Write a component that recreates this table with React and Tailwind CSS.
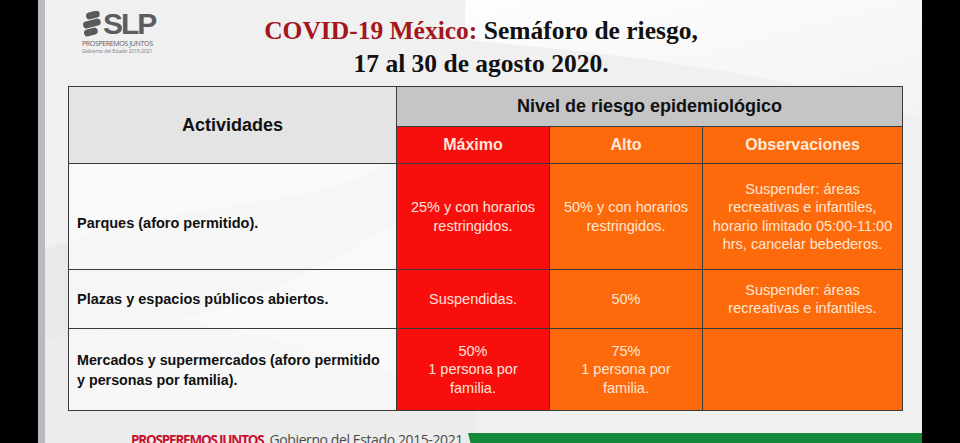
import React from "react";

const sans = { fontFamily: '"Liberation Sans", Arial, sans-serif' };

function Logo() {
  return (
    <div className="flex flex-col text-[#5d5d5f]" style={{ fontFamily: '"Open Sans", "Liberation Sans", sans-serif' }}>
      <div className="flex items-center">
        <svg width="20" height="26" viewBox="0 0 20 26" className="mr-[1px]">
          <g fill="#5a5a5c" transform="rotate(-14 10 13)">
            <rect x="6" y="1" width="14" height="7" rx="3.5" />
            <rect x="1" y="9" width="18" height="7" rx="3.5" />
            <rect x="0" y="17" width="14" height="7" rx="3.5" />
          </g>
        </svg>
        <span className="text-[30px] font-extrabold leading-[26px] tracking-[-2px]" style={{ fontFamily: '"Liberation Sans", Arial, sans-serif' }}>
          SLP
        </span>
      </div>
      <span className="mt-[3px] text-[7px] leading-[8px] tracking-[-0.35px]">PROSPEREMOS JUNTOS</span>
      <span className="text-[4.8px] leading-[6px] text-[#777]">Gobierno del Estado 2015-2021</span>
    </div>
  );
}

function Watermark() {
  return (
    <svg className="pointer-events-none absolute inset-0" width="877" height="443" viewBox="0 0 877 443">
      <defs>
        <linearGradient id="g1" x1="0" y1="0" x2="1" y2="1">
          <stop offset="0" stopColor="#ffffff" stopOpacity="0.9" />
          <stop offset="1" stopColor="#ffffff" stopOpacity="0.2" />
        </linearGradient>
      </defs>
      <path d="M0 250 C120 200 260 210 330 170 C360 150 380 140 420 150 L420 200 C360 210 300 260 200 300 C120 330 60 330 0 340 Z" fill="#e6e6e6" opacity="0.7" />
      <path d="M0 330 C100 300 200 330 300 360 C360 380 400 380 430 370 L430 443 L0 443 Z" fill="#e9e9e9" opacity="0.6" />
      <path d="M420 0 L877 0 L877 120 C760 80 640 60 420 40 Z" fill="url(#g1)" />
    </svg>
  );
}

const th = "border border-[#3a3a3a] p-0 text-center align-middle";

export default function App() {
  return (
    <div className="flex h-[443px] w-[960px] overflow-hidden bg-black">
      <div className="w-[38px] shrink-0" />
      <div className="w-[7px] shrink-0 bg-[#b7bac0]" />
      <div className="relative flex h-[443px] w-[877px] shrink-0 flex-col overflow-hidden bg-[#f0f0f0]">
        <Watermark />
        <div className="relative grid h-[86px] shrink-0 grid-cols-[1fr_auto_1fr]">
          <div className="pl-[37px] pt-[11px]">
            <Logo />
          </div>
          <h1
            className="pr-[5px] pt-[14px] text-center text-[25.5px] font-bold leading-[33px] text-[#111]"
            style={{ fontFamily: '"Liberation Serif", "Times New Roman", serif' }}
          >
            <span className="text-[#a3161c]">COVID-19 México:</span> Semáforo de riesgo,
            <br />
            17 al 30 de agosto 2020.
          </h1>
          <div />
        </div>

        <div className="relative shrink-0 pl-[23px] pr-[20px]" style={sans}>
          <table className="w-[834px] table-fixed border-collapse border border-[#3a3a3a]">
            <colgroup>
              <col className="w-[328px]" />
              <col className="w-[153px]" />
              <col className="w-[153px]" />
              <col className="w-[200px]" />
            </colgroup>
            <thead>
              <tr className="h-[40px]">
                <th rowSpan={2} className={`${th} bg-[#e4e4e4] text-[18px] font-bold text-[#111]`}>
                  Actividades
                </th>
                <th colSpan={3} className={`${th} bg-[#c5c5c5] text-[18px] font-bold text-[#111]`}>
                  Nivel de riesgo epidemiológico
                </th>
              </tr>
              <tr className="h-[37px] text-[16px] font-bold">
                <th className={`${th} bg-[#f80f0d] text-[#ffe6dc]`}>Máximo</th>
                <th className={`${th} bg-[#fd6a0c] text-[#ffe9d6]`}>Alto</th>
                <th className={`${th} bg-[#fd6a0c] text-[#ffe9d6]`}>Observaciones</th>
              </tr>
            </thead>
            <tbody className="text-[14.5px] leading-[18.5px]">
              <tr className="h-[106px]">
                <td className="border border-[#3a3a3a] bg-white/60 pl-[8px] pt-[14px] align-middle font-bold text-[#111]">
                  Parques (aforo permitido).
                </td>
                <td className={`${th} bg-[#f80f0d] text-[#ffe3d8]`}>
                  25% y con horarios
                  <br />
                  restringidos.
                </td>
                <td className={`${th} bg-[#fd6a0c] text-[#ffe6d0]`}>
                  50% y con horarios
                  <br />
                  restringidos.
                </td>
                <td className={`${th} bg-[#fd6a0c] text-[#ffe6d0]`}>
                  Suspender: áreas
                  <br />
                  recreativas e infantiles,
                  <br />
                  horario limitado 05:00-11:00
                  <br />
                  hrs, cancelar bebederos.
                </td>
              </tr>
              <tr className="h-[59px]">
                <td className="border border-[#3a3a3a] bg-white/60 pl-[8px] align-middle font-bold text-[#111]">
                  Plazas y espacios públicos abiertos.
                </td>
                <td className={`${th} bg-[#f80f0d] text-[#ffe3d8]`}>Suspendidas.</td>
                <td className={`${th} bg-[#fd6a0c] text-[#ffe6d0]`}>50%</td>
                <td className={`${th} bg-[#fd6a0c] text-[#ffe6d0]`}>
                  Suspender: áreas
                  <br />
                  recreativas e infantiles.
                </td>
              </tr>
              <tr className="h-[82px]">
                <td className="border border-[#3a3a3a] bg-white/60 pl-[8px] align-middle text-[14.3px] font-bold leading-[20px] text-[#111]">
                  Mercados y supermercados (aforo permitido
                  <br />
                  y personas por familia).
                </td>
                <td className={`${th} bg-[#f80f0d] text-[#ffe3d8]`}>
                  50%
                  <br />
                  1 persona por
                  <br />
                  familia.
                </td>
                <td className={`${th} bg-[#fd6a0c] text-[#ffe6d0]`}>
                  75%
                  <br />
                  1 persona por
                  <br />
                  familia.
                </td>
                <td className={`${th} bg-[#fd6a0c]`} />
              </tr>
            </tbody>
          </table>
        </div>

        <div className="relative mt-[22px] flex h-[20px] shrink-0 items-start">
          <div
            className="flex items-baseline gap-[6px] whitespace-nowrap pl-[86px] leading-[13px]"
            style={{ fontFamily: '"Open Sans", "Liberation Sans", sans-serif' }}
          >
            <span className="text-[13.5px] font-bold tracking-[-1.2px] text-[#c8102e]">PROSPEREMOS JUNTOS</span>
            <span className="text-[14px] tracking-[-0.4px] text-[#4a4a4a]">Gobierno del Estado 2015-2021</span>
          </div>
          <div className="ml-auto h-[20px] w-[454px] bg-[#15893a] [clip-path:polygon(0_0,100%_0,100%_100%,5px_100%)]" />
        </div>
      </div>
      <div className="flex-1" />
    </div>
  );
}
